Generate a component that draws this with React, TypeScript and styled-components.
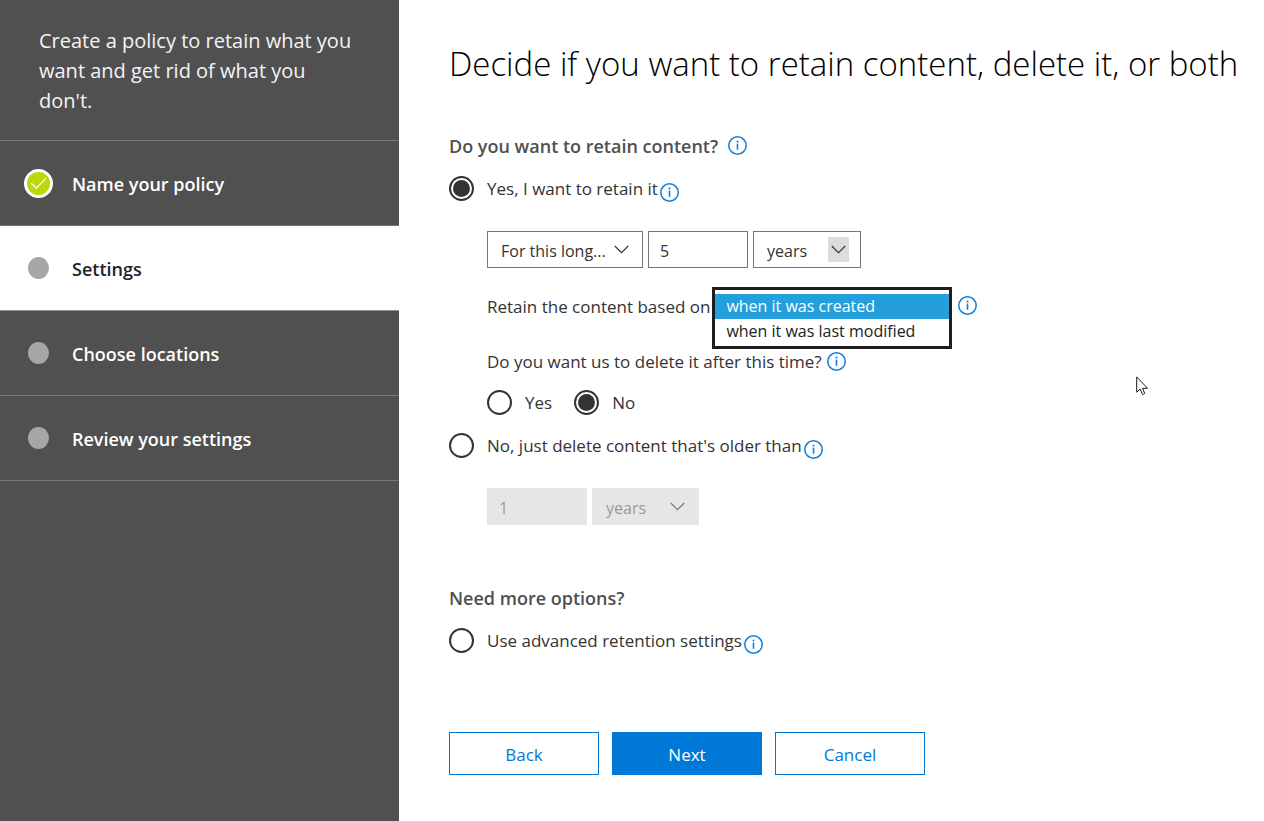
import React, { useId, useState } from 'react';
import styled, { createGlobalStyle, css } from 'styled-components';

const GlobalStyle = createGlobalStyle`
  *, *::before, *::after { box-sizing: border-box; }
  body {
    margin: 0;
    background: #fff;
    color: #333;
    font-family: "Segoe UI", "Open Sans", "Noto Sans", sans-serif;
    font-size: 17px;
    line-height: 24px;
  }
`;

const Page = styled.div`
  position: relative;
  display: flex;
  min-height: 100vh;
`;

const Sidebar = styled.aside`
  flex: none;
  width: 399px;
  background: #505050;
  color: #fff;
`;

const Intro = styled.p`
  margin: 0;
  padding: 26px 40px 24px 39px;
  border-bottom: 1px solid #757575;
  color: #f4f4f4;
  font-size: 20px;
  line-height: 30px;
`;

const Steps = styled.ol`
  margin: 0;
  padding: 0;
  list-style: none;
`;

const Step = styled.li<{ $current?: boolean }>`
  display: flex;
  align-items: center;
  gap: 19px;
  height: 85px;
  padding-left: 24px;
  border-bottom: 1px solid #757575;
  font-size: 18px;
  font-weight: 600;
  ${({ $current }) =>
    $current &&
    css`
      background: #fff;
      color: #222;
      border-bottom-color: #8f948f;
    `}
`;

const StepLabel = styled.span`
  padding-top: 2px;
`;

const StepMark = styled.span`
  display: flex;
  justify-content: center;
  width: 29px;
`;

const Dot = styled.span`
  width: 21px;
  height: 22px;
  border-radius: 50%;
  background: #a6a6a6;
`;

const Main = styled.main`
  flex: 1;
  min-width: 0;
  padding: 40px 20px 40px 50px;
`;

const Title = styled.h1`
  margin: 0 0 46px;
  color: #000;
  font-size: 33px;
  font-weight: 300;
  line-height: 48px;
`;

const Section = styled.section`
  & + & {
    margin-top: 61px;
  }
`;

const SectionHead = styled.div`
  display: flex;
  align-items: center;
  gap: 10px;
  margin-bottom: 17px;
`;

const SectionTitle = styled.h2`
  margin: 0;
  color: #505050;
  font-size: 18px;
  font-weight: 600;
  line-height: 24px;
`;

const Choice = styled.div`
  display: flex;
  align-items: center;
  gap: 2px;
  height: 27px;
`;

const RadioLabel = styled.label`
  display: flex;
  align-items: center;
  gap: 13px;
`;

const Radio = styled.input.attrs({ type: 'radio' })`
  appearance: none;
  flex: none;
  width: 25px;
  height: 25px;
  margin: 0;
  padding: 2px;
  border: 2px solid #333;
  border-radius: 50%;
  background-clip: content-box;
  &:checked {
    background-color: #333;
  }
`;

const Nested = styled.div`
  padding-left: 38px;
`;

const Fields = styled.div`
  display: flex;
  gap: 5px;
  margin-top: 29px;
`;

const field = css`
  height: 37px;
  border: 1px solid #767676;
  border-radius: 0;
  background: #fff;
  color: #333;
  font: inherit;
  font-size: 16px;
  &:disabled {
    border-color: #e6e6e6;
    background: #e6e6e6;
    color: #999;
    opacity: 1;
  }
`;

const NumberBox = styled.input`
  ${field}
  width: 100px;
  padding: 2px 11px 0;
`;

const SelectWrap = styled.span<{ $width: number }>`
  position: relative;
  display: block;
  width: ${({ $width }) => $width}px;
`;

const Select = styled.select`
  ${field}
  appearance: none;
  width: 100%;
  padding: 2px 13px 0;
`;

const Arrow = styled.span<{ $pressed?: boolean; $muted?: boolean }>`
  position: absolute;
  top: 6px;
  right: ${({ $pressed }) => ($pressed ? 12 : 11)}px;
  display: grid;
  place-items: center;
  width: 21px;
  height: 25px;
  background: ${({ $pressed }) => ($pressed ? '#dcdcdc' : 'transparent')};
  color: ${({ $muted }) => ($muted ? '#777' : '#333')};
  pointer-events: none;
`;

const BasisRow = styled.div`
  display: flex;
  align-items: flex-start;
  margin-top: 19px;
`;

const BasisLabel = styled.label`
  padding-top: 8px;
`;

const BasisList = styled.select`
  width: 240px;
  height: 62px;
  margin: 0 6px 0 2px;
  padding: 4px 0 0;
  border: 3px solid #1e1e1e;
  border-radius: 0;
  outline: none;
  overflow: hidden;
  background: #fff;
  font: inherit;
  font-size: 16px;
`;

const BasisOption = styled.option`
  height: 25px;
  min-height: 25px;
  padding: 1px 11px 0;
  color: #222;
  font: inherit;
  line-height: 25px;
  &:checked {
    background-image: linear-gradient(#259fdc, #259fdc);
    -webkit-text-fill-color: #fff;
  }
`;

const Question = styled.div`
  display: flex;
  align-items: center;
  gap: 5px;
  margin: 1px 0 16px;
`;

const Answers = styled.div`
  display: flex;
  gap: 22px;
  margin-bottom: 17px;
`;

const InfoButton = styled.button<{ $low?: boolean; $top?: number }>`
  display: block;
  flex: none;
  width: 19px;
  height: 19px;
  margin: ${({ $low, $top }) => ($top ? `${$top}px 0 0` : $low ? '8px 0 0' : '0 0 2px')};
  padding: 0;
  border: 0;
  background: none;
  color: #0f7fdc;
`;

const Actions = styled.div`
  display: flex;
  gap: 13px;
  margin-top: 78px;
`;

const ActionButton = styled.button<{ $primary?: boolean }>`
  width: 150px;
  height: 43px;
  padding: 2px 0 0;
  border: 1px solid #0078d7;
  border-radius: 0;
  background: ${({ $primary }) => ($primary ? '#0078d7' : '#fff')};
  color: ${({ $primary }) => ($primary ? '#fff' : '#0078d7')};
  font: inherit;
`;

const Pointer = styled.svg`
  position: absolute;
  left: 1136px;
  top: 376px;
  pointer-events: none;
`;

function Info({ about, low, top }: { about: string; low?: boolean; top?: number }) {
  return (
    <InfoButton type="button" aria-label={`More about ${about}`} $low={low} $top={top}>
      <svg width="19" height="19" viewBox="0 0 19 19" fill="none" aria-hidden="true">
        <circle cx="9.5" cy="9.5" r="8.7" stroke="currentColor" strokeWidth="1.5" />
        <path d="M9.5 7.6v6.2" stroke="currentColor" strokeWidth="1.6" />
        <circle cx="9.5" cy="5.5" r="1" fill="currentColor" />
      </svg>
    </InfoButton>
  );
}

function Dropdown(props: {
  label: string;
  options: string[];
  width: number;
  pressed?: boolean;
  disabled?: boolean;
}) {
  return (
    <SelectWrap $width={props.width}>
      <Select aria-label={props.label} disabled={props.disabled}>
        {props.options.map((o) => (
          <option key={o}>{o}</option>
        ))}
      </Select>
      <Arrow $pressed={props.pressed} $muted={props.disabled}>
        <svg width="15" height="9" viewBox="0 0 15 9" fill="none" aria-hidden="true">
          <path d="M0.8 1l6.7 6.7L14.2 1" stroke="currentColor" strokeWidth="1.1" />
        </svg>
      </Arrow>
    </SelectWrap>
  );
}

function DoneMark() {
  return (
    <svg width="29" height="29" viewBox="0 0 29 29" fill="none" aria-hidden="true">
      <circle cx="14.5" cy="14.5" r="13" fill="#bad80a" stroke="#fff" strokeWidth="3" />
      <path d="M7.3 14.2l5 5 9.6-9.8" stroke="#fff" strokeWidth="1.3" />
    </svg>
  );
}

const steps = [
  { label: 'Name your policy', done: true },
  { label: 'Settings', current: true },
  { label: 'Choose locations' },
  { label: 'Review your settings' },
];

export default function App() {
  const [mode, setMode] = useState('retain');
  const [remove, setRemove] = useState('no');
  const basisId = useId();

  return (
    <>
      <GlobalStyle />
      <Page>
        <Sidebar>
          <Intro>Create a policy to retain what you want and get rid of what you don't.</Intro>
          <Steps>
            {steps.map((s) => (
              <Step key={s.label} $current={s.current} aria-current={s.current ? 'step' : undefined}>
                <StepMark>{s.done ? <DoneMark /> : <Dot />}</StepMark>
                <StepLabel>{s.label}</StepLabel>
              </Step>
            ))}
          </Steps>
        </Sidebar>
        <Main>
          <Title>Decide if you want to retain content, delete it, or both</Title>
          <Section>
            <SectionHead>
              <SectionTitle>Do you want to retain content?</SectionTitle>
              <Info about="retaining content" />
            </SectionHead>
            <Choice>
              <RadioLabel>
                <Radio name="mode" checked={mode === 'retain'} onChange={() => setMode('retain')} />
                Yes, I want to retain it
              </RadioLabel>
              <Info about="this choice" low />
            </Choice>
            <Nested>
              <Fields>
                <Dropdown label="Retention period" options={['For this long...', 'Forever']} width={156} />
                <NumberBox aria-label="Retention length" defaultValue="5" />
                <Dropdown label="Retention unit" options={['years', 'months', 'days']} width={108} pressed />
              </Fields>
              <BasisRow>
                <BasisLabel htmlFor={basisId}>Retain the content based on</BasisLabel>
                <BasisList id={basisId} size={2} defaultValue="created">
                  <BasisOption value="created">when it was created</BasisOption>
                  <BasisOption value="modified">when it was last modified</BasisOption>
                </BasisList>
                <Info about="the start of the period" top={9} />
              </BasisRow>
              <Question>
                <span>Do you want us to delete it after this time?</span>
                <Info about="deleting content" />
              </Question>
              <Answers>
                <RadioLabel>
                  <Radio name="remove" checked={remove === 'yes'} onChange={() => setRemove('yes')} />
                  Yes
                </RadioLabel>
                <RadioLabel>
                  <Radio name="remove" checked={remove === 'no'} onChange={() => setRemove('no')} />
                  No
                </RadioLabel>
              </Answers>
            </Nested>
            <Choice>
              <RadioLabel>
                <Radio name="mode" checked={mode === 'delete'} onChange={() => setMode('delete')} />
                No, just delete content that's older than
              </RadioLabel>
              <Info about="deleting older content" low />
            </Choice>
            <Nested>
              <Fields>
                <NumberBox aria-label="Content age" defaultValue="1" disabled />
                <Dropdown label="Content age unit" options={['years', 'months', 'days']} width={107} disabled />
              </Fields>
            </Nested>
          </Section>
          <Section>
            <SectionHead>
              <SectionTitle>Need more options?</SectionTitle>
            </SectionHead>
            <Choice>
              <RadioLabel>
                <Radio name="mode" checked={mode === 'advanced'} onChange={() => setMode('advanced')} />
                Use advanced retention settings
              </RadioLabel>
              <Info about="advanced retention" low />
            </Choice>
          </Section>
          <Actions>
            <ActionButton type="button">Back</ActionButton>
            <ActionButton type="button" $primary>
              Next
            </ActionButton>
            <ActionButton type="button">Cancel</ActionButton>
          </Actions>
        </Main>
        <Pointer width="13" height="20" viewBox="0 0 13 20" aria-hidden="true">
          <path
            d="M0.7 0.9v15.3l3.4-3.2 2.3 5.2c0.9 0.6 1.9 0.2 2.3-0.7L6.6 12.3h4.9z"
            fill="#fff"
            stroke="#1a1a2a"
            strokeWidth="1"
          />
        </Pointer>
      </Page>
    </>
  );
}
